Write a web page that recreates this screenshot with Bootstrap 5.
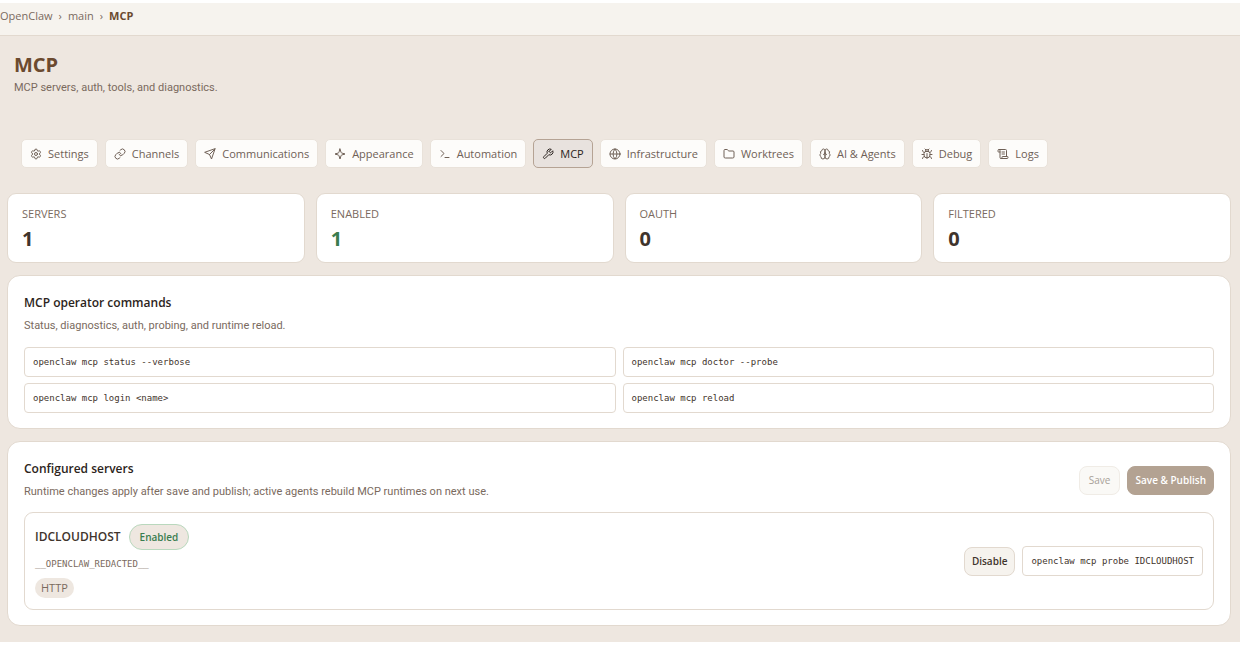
<!DOCTYPE html>
<html lang="en">
<head>
<meta charset="utf-8">
<meta name="viewport" content="width=device-width, initial-scale=1">
<title>OpenClaw · MCP</title>
<link href="https://cdn.jsdelivr.net/npm/bootstrap@5.3.0/dist/css/bootstrap.min.css" rel="stylesheet">
<style>
  :root {
    --line: #e2d9cf;
    --ink: #3f342c;
    --muted-ink: #7a6a5e;
    --brand: #6b4a2f;
    --sand: #eee7e0;
    --ok: #3a7d4f;
  }
  body {
    font-family: "Open Sans", "Noto Sans", sans-serif;
    font-size: 11px;
    line-height: 16px;
    color: var(--ink);
    background: #fff;
    padding: 3px 2px 0 0;
  }
  .topbar { background: #f6f3ee; border-bottom: 1px solid var(--line); height: 33px; color: var(--muted-ink); padding-bottom: 6px; }
  .crumbs { gap: 6px; }
  .topbar a { color: inherit; text-decoration: none; }
  .topbar .current { color: var(--brand); }
  .workspace { background: var(--sand); padding: 15px 9px 16px 7px; }
  .heading { padding: 0 7px; }
  .page-title { font-size: 20px; line-height: 28px; font-weight: 700; color: var(--brand); }
  .subtle { font-family: Roboto, "Open Sans", sans-serif; line-height: 18px; color: var(--muted-ink); }
  .tabs { gap: 7px; padding: 42px 14px 25px; }
  .tab { display: flex; align-items: center; gap: 6px; height: 29px; padding: 0 8px; border: 1px solid #e9e2da; border-radius: 5px; background: #fdfcfa; color: #6f6056; font-weight: 500; }
  .tab svg { width: 12px; height: 12px; fill: none; stroke: currentColor; stroke-width: 2; stroke-linecap: round; stroke-linejoin: round; }
  .tab.active { background: #e8e2de; border-color: #b5a394; color: #2c2420; }
  .stats { gap: 11px; }
  .stat { flex: 1 1 0; background: #fff; border: 1px solid var(--line); border-radius: 9px; padding: 12px 14px; height: 70px; }
  .stat-label { font-weight: 500; color: var(--muted-ink); }
  .stat-value { font-size: 20px; line-height: 28px; margin-top: 3px; font-weight: 700; }
  .stat-value.enabled { color: var(--ok); }
  .panel { background: #fff; border: 1px solid var(--line); border-radius: 13px; padding: 17px 16px 15px; margin-top: 12px; }
  .panel-title { font-size: 12px; line-height: 20px; font-weight: 600; color: #2c2420; }
  .commands { display: grid; grid-template-columns: 1fr 1fr; gap: 6px 7px; margin-top: 12px; }
  .command { display: block; border: 1px solid var(--line); border-radius: 4px; padding: 6px 8px; font: 9px/16px "DejaVu Sans Mono", monospace; color: var(--ink); background: #fff; white-space: nowrap; }
  .server { border: 1px solid var(--line); border-radius: 9px; padding: 11px 10px; margin-top: 11px; }
  .server-name { font-size: 12px; font-weight: 600; }
  .state { border: 1px solid #b9d8bd; border-radius: 13px; background: var(--sand); color: var(--ok); font-size: 10px; font-weight: 600; height: 26px; padding: 5px 10px; line-height: 14px; }
  .endpoint { font: 9px/14px "DejaVu Sans Mono", monospace; color: var(--muted-ink); margin: 7px 0; }
  .transport { display: inline-block; background: var(--sand); border-radius: 10px; padding: 2px 6px; color: var(--muted-ink); }
  .controls { gap: 7px; }
  .action { font-size: 10px; line-height: 16px; height: 29px; padding: 5px 7px; border: 1px solid var(--line); border-radius: 8px; background: #f6f3ee; color: var(--ink); font-weight: 600; }
  .action.quiet { padding: 5px 9px; background: #faf9f6; border-color: #f0ece6; color: #a8a098; font-weight: 500; }
  .action.publish { background: #b3a292; border-color: #b3a292; color: #fff; }
</style>
</head>
<body>
<header class="topbar d-flex align-items-center">
  <nav class="crumbs d-flex" aria-label="Breadcrumb">
    <a href="#">OpenClaw</a><span>›</span>
    <a href="#" class="fw-medium">main</a><span>›</span>
    <strong class="current">MCP</strong>
  </nav>
</header>
<main class="workspace">
  <div class="heading">
    <h1 class="page-title mb-0">MCP</h1>
    <p class="subtle mb-0">MCP servers, auth, tools, and diagnostics.</p>
  </div>
  <nav class="tabs d-flex flex-wrap" aria-label="Sections">
    <button type="button" class="tab"><svg viewBox="0 0 24 24"><path d="M9.671 4.136a2.34 2.34 0 0 1 4.659 0 2.34 2.34 0 0 0 3.319 1.915 2.34 2.34 0 0 1 2.33 4.033 2.34 2.34 0 0 0 0 3.831 2.34 2.34 0 0 1-2.33 4.033 2.34 2.34 0 0 0-3.319 1.915 2.34 2.34 0 0 1-4.659 0 2.34 2.34 0 0 0-3.32-1.915 2.34 2.34 0 0 1-2.33-4.033 2.34 2.34 0 0 0 0-3.831A2.34 2.34 0 0 1 6.35 6.051a2.34 2.34 0 0 0 3.319-1.915"/><circle cx="12" cy="12" r="3"/></svg>Settings</button>
    <button type="button" class="tab"><svg viewBox="0 0 24 24"><path d="M10 13a5 5 0 0 0 7.54.54l3-3a5 5 0 0 0-7.07-7.07l-1.72 1.71M14 11a5 5 0 0 0-7.54-.54l-3 3a5 5 0 0 0 7.07 7.07l1.71-1.71"/></svg>Channels</button>
    <button type="button" class="tab"><svg viewBox="0 0 24 24"><path d="m22 2-7 20-4-9-9-4ZM22 2 11 13"/></svg>Communications</button>
    <button type="button" class="tab"><svg viewBox="0 0 24 24"><path d="m12 2 2 6.5A2.2 2.2 0 0 0 15.500 10L22 12l-6.500 2a2.200 2.200 0 0 0-1.500 1.500L12 22l-2-6.500A2.200 2.200 0 0 0 8.500 14L2 12l6.500-2A2.200 2.200 0 0 0 10 8.500Z"/></svg>Appearance</button>
    <button type="button" class="tab"><svg viewBox="0 0 24 24"><path d="m4 17 6-6-6-6M12 19h8"/></svg>Automation</button>
    <button type="button" class="tab active" aria-current="page"><svg viewBox="0 0 24 24"><path d="M14.700 6.300a1 1 0 0 0 0 1.400l1.600 1.600a1 1 0 0 0 1.400 0l3.770-3.770a6 6 0 0 1-7.940 7.940l-6.910 6.910a2.120 2.120 0 0 1-3-3l6.910-6.910a6 6 0 0 1 7.940-7.940l-3.760 3.760z"/></svg>MCP</button>
    <button type="button" class="tab"><svg viewBox="0 0 24 24"><circle cx="12" cy="12" r="10"/><path d="M12 2a14.500 14.500 0 0 0 0 20 14.500 14.500 0 0 0 0-20M2 12h20"/></svg>Infrastructure</button>
    <button type="button" class="tab"><svg viewBox="0 0 24 24"><path d="M20 20a2 2 0 0 0 2-2V8a2 2 0 0 0-2-2h-7.900a2 2 0 0 1-1.690-.9L9.600 3.900A2 2 0 0 0 7.930 3H4a2 2 0 0 0-2 2v13a2 2 0 0 0 2 2Z"/></svg>Worktrees</button>
    <button type="button" class="tab"><svg viewBox="0 0 24 24"><path d="M12 5a3 3 0 1 0-5.997.125 4 4 0 0 0-2.526 5.770 4 4 0 0 0 .556 6.588A4 4 0 1 0 12 18ZM12 5a3 3 0 1 1 5.997.125 4 4 0 0 1 2.526 5.770 4 4 0 0 1-.556 6.588A4 4 0 1 1 12 18ZM15 13a4.500 4.500 0 0 1-3-4 4.500 4.500 0 0 1-3 4"/></svg>AI &amp; Agents</button>
    <button type="button" class="tab"><svg viewBox="0 0 24 24"><path d="m8 2 1.880 1.880M14.120 3.880 16 2M9 7.130v-1a3 3 0 1 1 6 0v1M12 20a6 6 0 0 1-6-6v-3a4 4 0 0 1 4-4h4a4 4 0 0 1 4 4v3a6 6 0 0 1-6 6M12 20v-9M6.530 9C4.600 8.800 3 7.100 3 5M6 13H2M3 21c0-2.100 1.700-3.900 3.800-4M20.970 5c0 2.100-1.600 3.800-3.500 4M22 13h-4M17.200 17c2.100.1 3.800 1.900 3.800 4"/></svg>Debug</button>
    <button type="button" class="tab"><svg viewBox="0 0 24 24"><path d="M15 12h-5M15 8h-5M19 17V5a2 2 0 0 0-2-2H4M8 21h12a2 2 0 0 0 2-2v-1a1 1 0 0 0-1-1H11a1 1 0 0 0-1 1v1a2 2 0 1 1-4 0V5a2 2 0 1 0-4 0v2a1 1 0 0 0 1 1h3"/></svg>Logs</button>
  </nav>

  <section class="stats d-flex" aria-label="Summary">
    <div class="stat"><div class="stat-label">SERVERS</div><div class="stat-value">1</div></div>
    <div class="stat"><div class="stat-label">ENABLED</div><div class="stat-value enabled">1</div></div>
    <div class="stat"><div class="stat-label">OAUTH</div><div class="stat-value">0</div></div>
    <div class="stat"><div class="stat-label">FILTERED</div><div class="stat-value">0</div></div>
  </section>

  <section class="panel">
    <h2 class="panel-title mb-1">MCP operator commands</h2>
    <p class="subtle mb-0">Status, diagnostics, auth, probing, and runtime reload.</p>
    <div class="commands">
      <code class="command">openclaw mcp status --verbose</code>
      <code class="command">openclaw mcp doctor --probe</code>
      <code class="command">openclaw mcp login &lt;name&gt;</code>
      <code class="command">openclaw mcp reload</code>
    </div>
  </section>

  <section class="panel">
    <div class="d-flex justify-content-between align-items-center">
      <div>
        <h2 class="panel-title mb-1">Configured servers</h2>
        <p class="subtle mb-0">Runtime changes apply after save and publish; active agents rebuild MCP runtimes on next use.</p>
      </div>
      <div class="controls d-flex">
        <button type="button" class="action quiet" disabled>Save</button>
        <button type="button" class="action publish" disabled>Save &amp; Publish</button>
      </div>
    </div>
    <div class="server d-flex justify-content-between align-items-center">
      <div>
        <div class="d-flex align-items-center gap-2"><span class="server-name">IDCLOUDHOST</span><span class="state">Enabled</span></div>
        <div class="endpoint">__OPENCLAW_REDACTED__</div>
        <span class="transport">HTTP</span>
      </div>
      <div class="controls d-flex align-items-center">
        <button type="button" class="action">Disable</button>
        <code class="command">openclaw mcp probe IDCLOUDHOST</code>
      </div>
    </div>
  </section>
</main>
<script src="https://cdn.jsdelivr.net/npm/bootstrap@5.3.0/dist/js/bootstrap.bundle.min.js"></script>
</body>
</html>
